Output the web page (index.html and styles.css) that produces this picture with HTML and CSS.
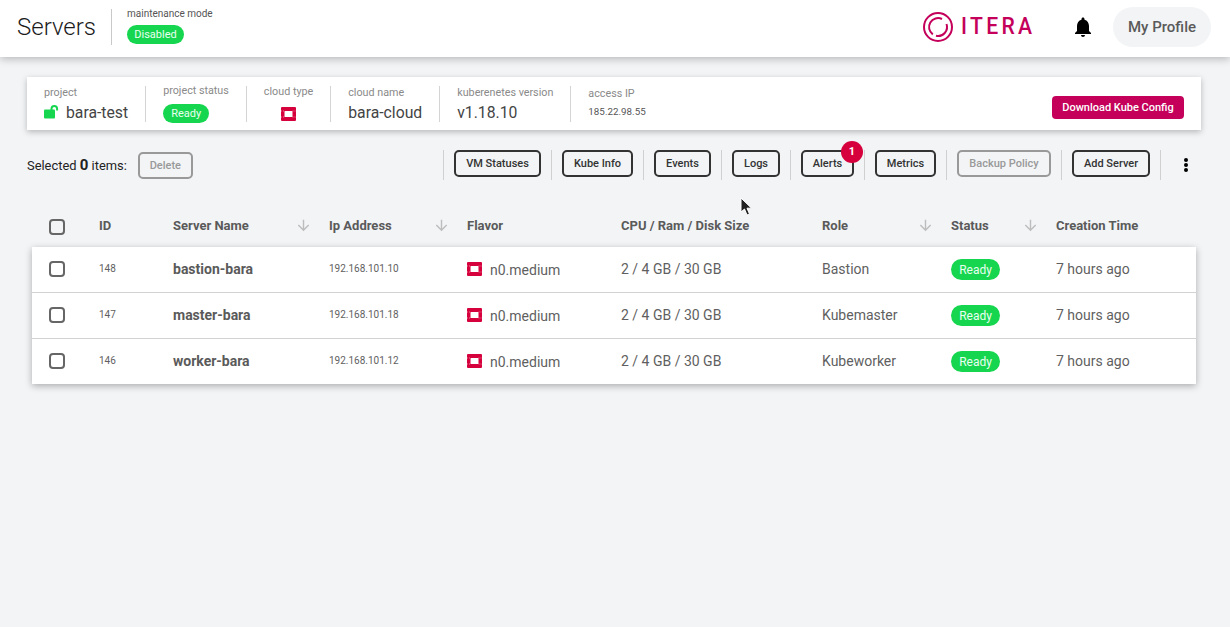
FILE: index.html
```html
<!DOCTYPE html>
<html>
<head>
    <title>Servers</title>
    <link rel="stylesheet" href="styles.css">
</head>
<body>
    <svg class="defs" width="0" height="0">
        <symbol id="openstack" viewBox="0 0 15 14">
            <path fill="#d6003c" fill-rule="evenodd" d="M1 0h13a1 1 0 0 1 1 1v12a1 1 0 0 1-1 1H1a1 1 0 0 1-1-1V1a1 1 0 0 1 1-1zM4 4a.5.5 0 0 0-.5.5v5a.5.5 0 0 0 .5.5h7a.5.5 0 0 0 .5-.5v-5A.5.5 0 0 0 11 4z"/>
            <path fill="none" stroke="#fff" stroke-opacity=".6" stroke-width=".8" stroke-dasharray="1 1" d="M0 4h3.500M11.500 4H15M0 10h3.500M11.500 10H15"/>
        </symbol>
        <symbol id="sort" viewBox="0 0 24 24">
            <path fill="#bdbdbd" d="M20 12l-1.410-1.410L13 16.170V4h-2v12.170l-5.580-5.600L4 12l8 8 8-8z"/>
        </symbol>
    </svg>

    <header class="topbar">
        <h1 class="page-title">Servers</h1>
        <div class="maintenance">
            <span class="maintenance-label">maintenance mode</span>
            <span class="pill pill-small">Disabled</span>
        </div>
        <div class="topbar-right">
            <div class="logo">
                <svg class="logo-ring" width="32" height="32" viewBox="0 0 32 32" fill="none" stroke="#c4005a" stroke-width="2">
                    <circle cx="16" cy="16" r="14"/>
                    <path d="M20 8A9 9 0 0 0 10.800 23.400"/>
                    <path d="M14 24.800A9 9 0 0 0 24.500 13"/>
                </svg>
                <span class="logo-text">ITERA</span>
            </div>
            <svg class="bell" width="24" height="24" viewBox="0 0 24 24">
                <path fill="#000" d="M12 22c1.100 0 2-.9 2-2h-4c0 1.100.9 2 2 2zm6-6v-5c0-3.070-1.630-5.640-4.500-6.320V4c0-.83-.67-1.500-1.500-1.500s-1.500.67-1.500 1.500v.68C7.640 5.360 6 7.920 6 11v5l-2 2v1h16v-1l-2-2z"/>
            </svg>
            <button class="profile">My Profile</button>
        </div>
    </header>

    <main class="content">
        <section class="info-card">
            <div class="info-item">
                <span class="info-label">project</span>
                <span class="info-value">
                    <svg class="lock" width="15" height="14" viewBox="0 -.5 15 14">
                        <path fill="#16d64f" d="M1 4h9a1 1 0 0 1 1 1v7a1 1 0 0 1-1 1H1a1 1 0 0 1-1-1V5a1 1 0 0 1 1-1z"/>
                        <path fill="none" stroke="#16d64f" stroke-width="2" d="M7.500 5V3.300a2.800 2.800 0 0 1 5.600 0v1.700"/>
                    </svg>
                    bara-test
                </span>
            </div>
            <div class="info-item">
                <span class="info-label label-status">project status</span>
                <span class="pill pill-info">Ready</span>
            </div>
            <div class="info-item info-center">
                <span class="info-label label-cloud">cloud type</span>
                <svg class="info-icon" width="15" height="14"><use href="#openstack"/></svg>
            </div>
            <div class="info-item">
                <span class="info-label">cloud name</span>
                <span class="info-value">bara-cloud</span>
            </div>
            <div class="info-item">
                <span class="info-label">kuberenetes version</span>
                <span class="info-value">v1.18.10</span>
            </div>
            <div class="info-item info-last">
                <span class="info-label label-access">access IP</span>
                <span class="info-small">185.22.98.55</span>
            </div>
            <button class="download">Download Kube Config</button>
        </section>

        <section class="toolbar">
            <span class="selected">Selected <b>0</b> items:</span>
            <button class="btn btn-off btn-delete">Delete</button>
            <div class="actions">
                <button class="btn btn-vm">VM Statuses</button>
                <button class="btn btn-kube">Kube Info</button>
                <button class="btn btn-events">Events</button>
                <button class="btn btn-logs">Logs</button>
                <div class="badge-wrap">
                    <button class="btn btn-alerts">Alerts</button>
                    <span class="badge">1</span>
                </div>
                <button class="btn btn-metrics">Metrics</button>
                <button class="btn btn-off btn-backup">Backup Policy</button>
                <button class="btn btn-add">Add Server</button>
                <svg class="more" width="6" height="16" viewBox="0 0 6 16">
                    <circle cx="3" cy="3" r="2"/><circle cx="3" cy="8" r="2"/><circle cx="3" cy="13" r="2"/>
                </svg>
            </div>
        </section>

        <section class="servers">
            <div class="row row-head">
                <span class="check"></span>
                <span>ID</span>
                <span class="sortable">Server Name <svg width="17" height="17"><use href="#sort"/></svg></span>
                <span class="sortable">Ip Address <svg width="17" height="17"><use href="#sort"/></svg></span>
                <span>Flavor</span>
                <span>CPU / Ram / Disk Size</span>
                <span class="sortable">Role <svg width="17" height="17"><use href="#sort"/></svg></span>
                <span class="sortable">Status <svg width="17" height="17"><use href="#sort"/></svg></span>
                <span>Creation Time</span>
            </div>
            <div class="table-card">
                <div class="row">
                    <span class="check"></span>
                    <span class="cell-small">148</span>
                    <span class="cell-name">bastion-bara</span>
                    <span class="cell-small">192.168.101.10</span>
                    <span class="cell-flavor"><svg width="15" height="14"><use href="#openstack"/></svg><span class="flavor-name">n0.medium</span></span>
                    <span>2 / 4 GB / 30 GB</span>
                    <span>Bastion</span>
                    <span class="cell-status"><span class="pill pill-row">Ready</span></span>
                    <span>7 hours ago</span>
                </div>
                <div class="row">
                    <span class="check"></span>
                    <span class="cell-small">147</span>
                    <span class="cell-name">master-bara</span>
                    <span class="cell-small">192.168.101.18</span>
                    <span class="cell-flavor"><svg width="15" height="14"><use href="#openstack"/></svg><span class="flavor-name">n0.medium</span></span>
                    <span>2 / 4 GB / 30 GB</span>
                    <span>Kubemaster</span>
                    <span class="cell-status"><span class="pill pill-row">Ready</span></span>
                    <span>7 hours ago</span>
                </div>
                <div class="row">
                    <span class="check"></span>
                    <span class="cell-small">146</span>
                    <span class="cell-name">worker-bara</span>
                    <span class="cell-small">192.168.101.12</span>
                    <span class="cell-flavor"><svg width="15" height="14"><use href="#openstack"/></svg><span class="flavor-name">n0.medium</span></span>
                    <span>2 / 4 GB / 30 GB</span>
                    <span>Kubeworker</span>
                    <span class="cell-status"><span class="pill pill-row">Ready</span></span>
                    <span>7 hours ago</span>
                </div>
            </div>
        </section>
    </main>

    <svg class="cursor" width="13" height="19" viewBox="0 0 13 19">
        <path fill="#222" stroke="#fff" stroke-width="1" d="M1 1v14l3.500-3 2.500 6 2.500-1-2.500-5.800H11.500z"/>
    </svg>
</body>
</html>
```

FILE: styles.css
```css
* { box-sizing: border-box; }

html, body {
    height: 100%;
    margin: 0;
    overflow: hidden;
}

body {
    background: #f2f4f6;
    color: #5f5f5f;
    font-family: Roboto, "Liberation Sans", sans-serif;
    font-size: 14px;
    position: relative;
}

button {
    font-family: inherit;
    cursor: pointer;
}

.defs { position: absolute; }

/* Top bar */
.topbar {
    height: 57px;
    background: #fff;
    box-shadow: 0 2px 8px rgba(0, 0, 0, 0.25);
    display: flex;
    align-items: center;
    padding: 0 19px 3px 17px;
}

.page-title {
    margin: 0;
    padding-right: 15px;
    font-size: 24px;
    font-weight: 300;
    color: #1c1c1c;
}

.maintenance {
    display: flex;
    flex-direction: column;
    align-items: flex-start;
    gap: 5px;
    height: 36px;
    padding-left: 15px;
    border-left: 1px solid #c9c9c9;
}

.maintenance-label {
    font-size: 10px;
    line-height: 12px;
    margin-top: -1px;
    color: #555;
}

.topbar-right {
    margin-left: auto;
    display: flex;
    align-items: center;
}

.logo {
    display: flex;
    align-items: center;
    width: 110px;
    color: #c4005a;
}

.logo-ring {
    flex-shrink: 0;
    margin-left: -1px;
}

.logo-text {
    font-size: 23px;
    font-weight: 500;
    letter-spacing: 3.600px;
    line-height: 32px;
    margin-left: 7px;
    transform: scaleX(0.92);
    transform-origin: left center;
}

.bell { margin-left: 38px; }

.profile {
    width: 98px;
    height: 40px;
    margin-left: 18px;
    border: 0;
    border-radius: 20px;
    background: #f2f4f6;
    color: #5a5a5a;
    font-size: 15px;
    font-weight: 500;
}

/* Pills */
.pill {
    display: inline-block;
    background: #16d64f;
    color: #e9fff0;
    border-radius: 10px;
    text-align: center;
}

.pill-small {
    width: 57px;
    height: 19px;
    font-size: 11px;
    line-height: 19px;
}

.pill-info {
    width: 46px;
    height: 19px;
    font-size: 11px;
    line-height: 19px;
    margin-top: 6px;
}

.pill-row {
    width: 49px;
    height: 21px;
    font-size: 12px;
    line-height: 23px;
    border-radius: 11px;
}

/* Project info */
.content { padding: 20px 29px 0 27px; }

.info-card {
    height: 53px;
    background: #fff;
    box-shadow: 0 2px 6px rgba(0, 0, 0, 0.25);
    display: flex;
    align-items: center;
    padding: 0 17px;
}

.info-item {
    display: flex;
    flex-direction: column;
    align-items: flex-start;
    height: 36px;
    padding-right: 17px;
    margin-right: 17px;
    border-right: 1px solid #d4d4d4;
}

.info-center { align-items: center; }

.info-last { border-right: 0; }

.info-label {
    font-size: 10.750px;
    line-height: 14px;
    color: #8a8a8a;
}

.label-status { margin-top: -2px; }

.label-cloud { margin-top: -1px; }

.label-access { margin-top: 1px; }

.info-value {
    display: flex;
    align-items: center;
    gap: 7px;
    font-size: 15.750px;
    line-height: 19px;
    padding-top: 3px;
    color: #444;
}

.info-small {
    font-size: 9.800px;
    line-height: 19px;
    padding-top: 1px;
    color: #555;
}

.info-icon { margin-top: 8px; }

.download {
    margin: 8px 0 0 auto;
    height: 23px;
    width: 132px;
    padding: 0;
    border: 0;
    border-radius: 4px;
    background: #c4005a;
    color: #fff;
    font-size: 11px;
    font-weight: 500;
}

/* Toolbar */
.toolbar {
    display: flex;
    align-items: center;
    height: 30px;
    margin-top: 20px;
}

.selected {
    font-size: 12.900px;
    color: #222;
    margin-right: 11px;
}

.selected b { font-size: 15px; }

.btn {
    height: 27px;
    padding: 0;
    border: 2px solid #333;
    border-radius: 5px;
    background: transparent;
    color: #333;
    font-size: 11px;
    font-weight: 500;
}

.btn-off {
    border-color: #999;
    color: #999;
}

.btn-delete {
    margin-top: 1px;
    width: 55px;
}

.btn-vm { width: 87px; }

.btn-kube { width: 71px; }

.btn-events { width: 57px; }

.btn-logs { width: 48px; }

.btn-alerts { width: 53px; }

.btn-metrics { width: 61px; }

.btn-backup { width: 94px; }

.btn-add { width: 78px; }

.actions {
    margin-left: auto;
    display: flex;
    align-items: flex-start;
    height: 30px;
    gap: 21px;
    width: 758px;
    background-image: linear-gradient(#d0d0d0, #d0d0d0);
    background-repeat: no-repeat;
    background-size: 1px 30px;
}

.actions > .btn,
.actions > .badge-wrap {
    position: relative;
}

.actions > .btn::after,
.badge-wrap::after {
    content: "";
    position: absolute;
    top: -2px;
    right: -13px;
    width: 1px;
    height: 30px;
    background: #d0d0d0;
}

.actions > :first-child { margin-left: 11px; }

.badge-wrap { height: 27px; display: flex; }

.badge-wrap::after { top: 0; right: -11px; }

.badge {
    position: absolute;
    top: -9px;
    right: -9px;
    width: 22px;
    height: 22px;
    border-radius: 50%;
    background: #d6003c;
    color: #fff;
    font-size: 11px;
    font-weight: 700;
    line-height: 22px;
    text-align: center;
}

.more {
    align-self: center;
    margin-left: 12px;
}

/* Servers table */
.servers { margin: 23px 5px 0; }

.row {
    display: grid;
    grid-template-columns: 50px 74px 156px 138px 154px 201px 129px 105px 1fr;
    align-items: center;
    height: 46px;
    padding: 0 0 2px 17px;
    font-size: 14px;
    color: #5f5f5f;
}

.row-head {
    height: 44px;
    padding-bottom: 0;
    font-size: 13px;
    font-weight: 700;
    color: #5a5a5a;
}

.row-head .check { margin-top: 3px; }

.table-card {
    background: #fff;
    box-shadow: 0 2px 7px rgba(0, 0, 0, 0.3);
}

.table-card .row:first-child { height: 45px; }

.table-card .row + .row { border-top: 1px solid #d2d2d2; }

.check {
    width: 16px;
    height: 16px;
    border: 2px solid #666;
    border-radius: 4px;
    margin-top: 1px;
}

.sortable {
    display: flex;
    justify-content: space-between;
    align-items: center;
    padding-right: 17px;
}

.cell-small { font-size: 10px; }

.cell-name {
    font-weight: 700;
    color: #5a5a5a;
}

.cell-flavor {
    display: flex;
    align-items: center;
    gap: 8px;
    padding-top: 1px;
}

.flavor-name { padding-top: 2px; }

.cell-status {
    display: flex;
    padding-top: 2px;
}

/* Mouse pointer captured in the screenshot */
.cursor {
    position: absolute;
    left: 740px;
    top: 197px;
}
```
